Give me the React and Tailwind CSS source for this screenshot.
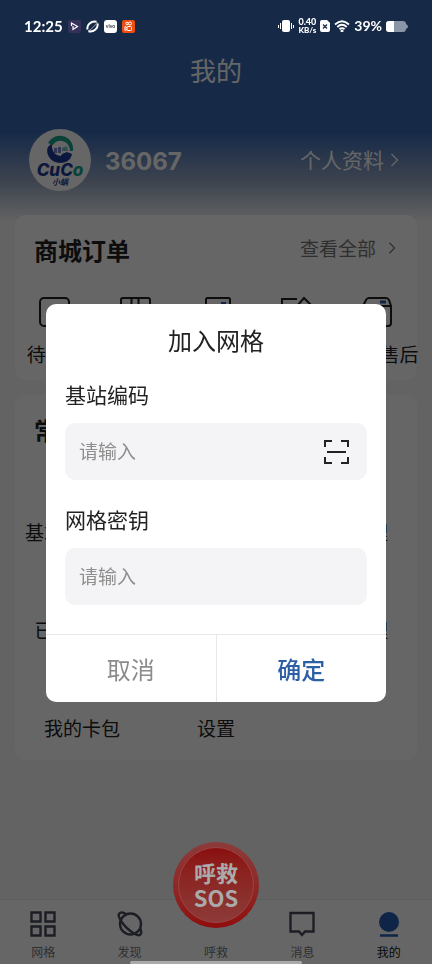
import { useState } from "react";

const orders = [
  { id: "pay", label: "待付款" },
  { id: "ship", label: "" },
  { id: "receive", label: "" },
  { id: "review", label: "" },
  { id: "refund", label: "退款/售后" },
];

const tools = [
  "基站网络管理", "", "设备管理",
  "已加入网格", "", "网格管理",
  "我的卡包", "设置",
];

function OrderIcon({ id }) {
  return (
    <svg className="h-8 w-8" viewBox="0 0 32 32" fill="none" stroke="#222" strokeWidth="2">
      {id === "pay" && <rect x="1" y="2" width="29" height="28" rx="4" />}
      {id === "ship" && (
        <>
          <rect x="1" y="2" width="29" height="28" rx="2" />
          <path d="M11.500 2v12M18.500 2v12" />
        </>
      )}
      {id === "receive" && (
        <>
          <path d="M6 30V3.500Q6 2 7.500 2H28.500Q30 2 30 3.500V30Z" />
          <path d="M21 7h5" stroke="#2f5bb0" />
        </>
      )}
      {id === "review" && <path d="M17 3H2V30H30V14M17 10L24 2L31 9" />}
      {id === "refund" && (
        <>
          <path d="M2 10L5 4Q6 2 8 2H25Q27 2 28 4L30 10V27Q30 30 27 30H5Q2 30 2 27ZM2 10H30" />
          <path d="M19 6h6" stroke="#2f5bb0" strokeWidth="3" />
        </>
      )}
    </svg>
  );
}

function Chevron({ className }) {
  return (
    <svg className={className} viewBox="0 0 8 16" fill="none" stroke="currentColor" strokeWidth="1.300">
      <path d="M1 2L7 8L1 14" />
    </svg>
  );
}

function Avatar() {
  return (
    <div className="flex h-[62px] w-[62px] shrink-0 flex-col items-center rounded-full bg-white pt-[6px]">
      <svg className="h-7 w-7" viewBox="0 0 28 28">
        <path d="M2 8C5 3 10 0 16 1C23 2 28 8 27 16H24C24 11 21 7 16 6C12 5 9 7 7 10Z" fill="#18a58c" />
        <path d="M6 8L2 12C-1 18 4 28 14 28C20 28 25 25 26 19L21 17C19 18 16 18 15 21C10 21 5 17 6 8Z" fill="#1d3a9a" />
        <path d="M8 13h3v5H8zM12 12h3v6h-3z" fill="#7a86d0" />
        <path d="M16 13L21 11L22 16H16Z" fill="#7cc4c4" />
      </svg>
      <div className="font-['Inter',sans-serif] text-[17px] leading-[14px] font-extrabold text-[#1d3a9a] italic">
        CuC<span className="text-[#18a58c]">o</span>
      </div>
      <div className="text-[8px] leading-[10px] font-bold text-[#1d3a9a] italic">小蜗</div>
    </div>
  );
}

function StatusBar() {
  return (
    <div className="relative z-30 flex h-[52px] items-center justify-between px-6 font-['Lato',sans-serif] text-white">
      <div className="flex items-center gap-[5px]">
        <span className="text-[15px] leading-5 font-bold">12:25</span>
        <svg className="h-[13px] w-[13px]" viewBox="0 0 13 13">
          <rect width="13" height="13" rx="2" fill="#35315a" />
          <path d="M3.500 6V3L9.500 6.500L5 9.500V6" fill="none" stroke="#fff" strokeWidth="1.200" />
        </svg>
        <svg className="h-[13px] w-[13px]" viewBox="0 0 13 13" fill="none" stroke="#fff">
          <path d="M1.500 9.500C0.500 5 5 0.500 10.500 1.700M11.500 3.500C12.500 8 8 12.500 2.500 11.300" strokeWidth="2" />
          <path d="M2 11C4 10.500 10 5 11.300 2" strokeWidth="0.600" />
        </svg>
        <svg className="h-[13px] w-[13px]" viewBox="0 0 13 13">
          <rect width="13" height="13" rx="3" fill="#fff" />
          <text x="6.500" y="8" textAnchor="middle" fontSize="5" fontWeight="700" fill="#333">vivo</text>
        </svg>
        <svg className="h-[13px] w-[13px]" viewBox="0 0 13 13">
          <rect width="13" height="13" rx="2" fill="#ee4d12" />
          <g fill="none" stroke="#fff">
            <circle cx="5" cy="3.500" r="1.200" />
            <circle cx="8" cy="3.500" r="1.500" />
            <rect x="5" y="6.500" width="4.500" height="4" rx="1" />
            <path d="M5 7.500L3 6.500V10.500L5 9.500" />
          </g>
        </svg>
      </div>
      <div className="flex items-center gap-1">
        <svg className="h-[14px] w-4" viewBox="0 0 16 14" fill="#fff">
          <rect x="4" y="1" width="8" height="12" rx="2" />
          <path d="M2 4h1v6H2zM0 6h1v3H0zM13 4h1v6h-1zM15 6h1v3h-1z" />
        </svg>
        <span className="flex flex-col items-center text-[8px] leading-[8px] font-black">
          <span className="text-[9px]">0.40</span>
          <span>KB/s</span>
        </span>
        <svg className="h-3 w-[10px]" viewBox="0 0 10 12">
          <path d="M2 0H7L10 3V10Q10 12 8 12H2Q0 12 0 10V2Q0 0 2 0Z" fill="#fff" />
          <path d="M3 4.500L7 8.500M7 4.500L3 8.500" stroke="#162a48" strokeWidth="1.300" />
        </svg>
        <svg className="h-3 w-4" viewBox="0 0 16 12" fill="none" stroke="#fff" strokeWidth="1.800">
          <path d="M1 4.500Q8 -2 15 4.500M3.300 7Q8 2.600 12.700 7M5.500 9.200Q8 7 10.500 9.200" />
          <circle cx="8" cy="11" r="0.600" />
        </svg>
        <span className="text-sm leading-5 font-bold">39%</span>
        <svg className="h-[11px] w-[22px]" viewBox="0 0 22 11">
          <path d="M3 0H17Q20 0 20 3Q22 4 22 5.500Q22 7 20 8Q20 11 17 11H3Q0 11 0 8V3Q0 0 3 0Z" fill="#8a95a5" />
          <path d="M3 0H8V11H3Q0 11 0 8V3Q0 0 3 0Z" fill="#fff" />
        </svg>
      </div>
    </div>
  );
}

function TabItem({ label, active, children }) {
  return (
    <a href="#" className={`flex flex-1 flex-col items-center pt-[11px] ${active ? "text-[#111]" : "text-[#777]"}`}>
      <svg className="h-[26px] w-[26px]" viewBox="0 0 26 26" fill="none" stroke="#4a4c5c" strokeWidth="2.400">
        {children}
      </svg>
      <span className="mt-[6px] text-xs leading-[18px]">{label}</span>
    </a>
  );
}

function TabBar() {
  return (
    <nav className="relative flex h-[65px] border-t border-[#eee] bg-white">
      <TabItem label="网格">
        <path d="M1.500 1.500h9v9h-9zM15.500 1.500h9v9h-9zM1.500 15.500h9v9h-9zM15.500 15.500h9v9h-9z" />
      </TabItem>
      <TabItem label="发现">
        <circle cx="13.500" cy="13" r="10.500" />
        <path d="M9 3C4 0 0 2 2.500 7C5 13 12 20 18 23C23 26 26 23 23 17" />
      </TabItem>
      <TabItem label="呼救" />
      <TabItem label="消息">
        <path d="M1.500 2H24.500V20.500H16L13 24L10 20.500H1.500Z" />
      </TabItem>
      <TabItem label="我的" active>
        <circle cx="13" cy="11" r="10" fill="#245cb2" stroke="none" />
        <path d="M4 24.500H22" stroke="#245cb2" strokeWidth="2.500" />
      </TabItem>
    </nav>
  );
}

function JoinDialog({ onClose }) {
  const [station, setStation] = useState("");
  const [secret, setSecret] = useState("");

  return (
    <div className="fixed inset-0 z-20 flex items-center bg-black/60 px-[46px] pt-[42px]">
      <form
        role="dialog"
        aria-labelledby="join-title"
        onSubmit={(e) => e.preventDefault()}
        className="w-full overflow-hidden rounded-[10px] bg-white text-[#222]"
      >
        <div className="px-[19px] pt-[18px] pb-[29px]">
          <h2 id="join-title" className="text-center text-2xl leading-9">加入网格</h2>

          <label htmlFor="station" className="mt-5 block text-[21px] leading-8">基站编码</label>
          <div className="mt-[13px] flex h-[57px] items-center rounded-[10px] bg-[#f4f4f6] pr-[18px] pl-[14px]">
            <input
              id="station"
              value={station}
              onChange={(e) => setStation(e.target.value)}
              placeholder="请输入"
              className="min-w-0 flex-1 bg-transparent text-[19px] outline-none placeholder:text-[#8e8e8e]"
            />
            <button type="button" aria-label="扫码">
              <svg className="h-[26px] w-[26px]" viewBox="0 0 26 26" fill="none" stroke="#222" strokeWidth="2">
                <path d="M2 8V2H9M18 2H25V8M25 18V24H18M9 24H2V18M4 13H23" />
              </svg>
            </button>
          </div>

          <label htmlFor="secret" className="mt-[23px] block text-[21px] leading-8">网格密钥</label>
          <div className="mt-[13px] flex h-[57px] items-center rounded-[10px] bg-[#f4f4f6] px-[14px]">
            <input
              id="secret"
              value={secret}
              onChange={(e) => setSecret(e.target.value)}
              placeholder="请输入"
              className="min-w-0 flex-1 bg-transparent text-[19px] outline-none placeholder:text-[#8e8e8e]"
            />
          </div>
        </div>

        <div className="flex h-[68px] border-t border-[#e8e8e8] text-2xl">
          <button type="button" onClick={onClose} className="flex-1 border-r border-[#e8e8e8] text-[#8c8c8c]">
            取消
          </button>
          <button type="submit" className="flex-1 font-medium text-[#2d5fa6]">确定</button>
        </div>
      </form>
    </div>
  );
}

export default function App() {
  const [open, setOpen] = useState(true);

  return (
    <div className="relative flex min-h-screen flex-col bg-[#f7f7f8] bg-[linear-gradient(to_bottom,#3769b4_0px,#3769b4_132px,#96a7c4_180px,#f7f7f8_222px)] font-['Noto_Sans_CJK_SC',sans-serif] text-[#222]">
      <StatusBar />

      <header>
        <h1 className="text-center text-[26px] leading-9 text-white">我的</h1>
        <div className="mt-[41px] flex items-center pr-[33px] pl-[29px] text-white">
          <Avatar />
          <span className="ml-[14px] flex-1 pt-[3px] font-['Inter',sans-serif] text-2xl font-bold">36067</span>
          <a href="#" className="flex items-center gap-[6px] text-[21px]">
            个人资料
            <Chevron className="h-4 w-[9px]" />
          </a>
        </div>
      </header>

      <main className="mt-6 flex-1 px-[15px]">
        <section className="h-[165px] rounded-[10px] bg-white">
          <div className="flex items-start justify-between pt-[17px] pr-[21px] pl-[19px]">
            <h2 className="text-2xl leading-9 font-bold">商城订单</h2>
            <a href="#" className="flex items-center gap-3 text-[19px] leading-8 text-[#777]">
              查看全部
              <Chevron className="h-[14px] w-2" />
            </a>
          </div>
          <div className="mt-7 grid grid-cols-5">
            {orders.map((item) => (
              <div key={item.id} className="flex flex-col items-center">
                <OrderIcon id={item.id} />
                <span className="mt-3 text-[19px] leading-7 whitespace-nowrap">{item.label}</span>
              </div>
            ))}
          </div>
        </section>

        <section className="mt-[15px] h-[365px] rounded-[10px] bg-white">
          <h2 className="pt-[17px] pl-[19px] text-2xl leading-9 font-bold">常用功能</h2>
          <div className="mt-[14px] grid grid-cols-3">
            {tools.map((label, i) => (
              <div key={i} className="flex h-[98px] items-end justify-center pb-[14px] text-[19px] leading-7">
                {label}
              </div>
            ))}
          </div>
        </section>
      </main>

      <TabBar />

      {open && <JoinDialog onClose={() => setOpen(false)} />}

      <button
        type="button"
        className="absolute bottom-9 left-1/2 z-30 flex h-[86px] w-[86px] -translate-x-1/2 items-center justify-center rounded-full bg-linear-to-b from-[#8c3a3a] to-[#8f0c0c]"
      >
        <span className="flex h-[76px] w-[76px] flex-col items-center justify-center rounded-full border border-[#9c4444] bg-linear-to-b from-[#8a0f0f] to-[#8c3a38] text-[22px] leading-[25px] font-bold text-[#aaa]">
          <span>呼救</span>
          <span>SOS</span>
        </span>
      </button>
      <div className="absolute bottom-0 left-1/2 z-30 h-[3px] w-[172px] -translate-x-1/2 rounded-full bg-[#aaa]" />
    </div>
  );
}
